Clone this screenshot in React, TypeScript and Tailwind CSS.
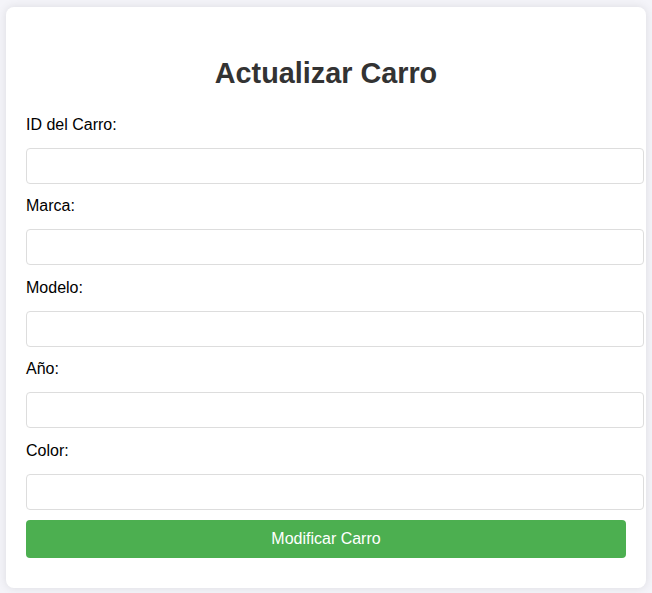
import React from "react";

const fields = ["ID del Carro:", "Marca:", "Modelo:", "Año:", "Color:"];

export default function App() {
  return (
    <div className="min-h-screen bg-[#f4f4f9] pt-[7px] font-['Liberation_Sans',Arial,sans-serif]">
      <div className="mx-auto w-[640px] rounded-[8px] bg-white px-5 pt-[50px] pb-[30px] shadow-[0_0_10px_rgba(0,0,0,0.1)]">
        <h2 className="mb-[26px] text-center text-[28.8px] leading-[33px] font-bold text-[#333]">
          Actualizar Carro
        </h2>
        <form className="flex flex-col" onSubmit={(e) => e.preventDefault()}>
          {fields.map((f) => (
            <React.Fragment key={f}>
              <label className="mb-[13.5px] block text-[16px] leading-[18.4px] text-black">{f}</label>
              <input
                type="text"
                className="mb-[13.5px] h-[36px] w-[618px] rounded-[4px] border border-[#ddd] bg-white px-2 text-[16px] outline-none"
              />
            </React.Fragment>
          ))}
          <button
            type="submit"
            className="mt-[-3.5px] h-[38px] w-[600px] rounded-[4px] bg-[#4CAF50] text-[16px] text-white"
          >
            Modificar Carro
          </button>
        </form>
      </div>
    </div>
  );
}
